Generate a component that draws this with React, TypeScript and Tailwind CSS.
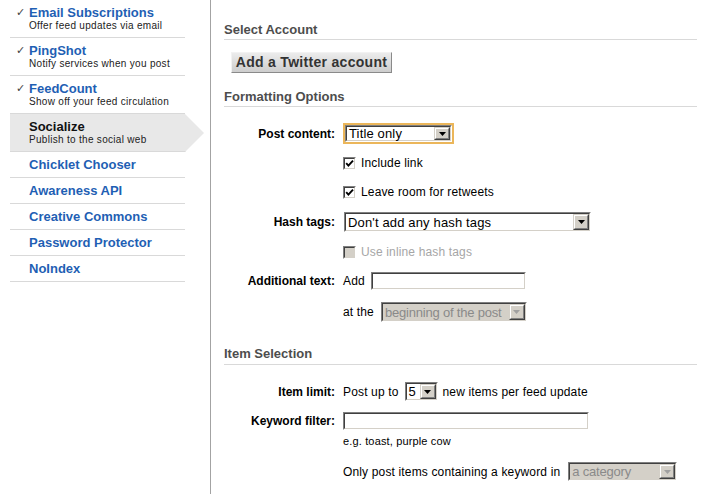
import clsx from "clsx";
import type { ReactNode } from "react";

const navItems = [
  { title: "Email Subscriptions", sub: "Offer feed updates via email", done: true },
  { title: "PingShot", sub: "Notify services when you post", done: true },
  { title: "FeedCount", sub: "Show off your feed circulation", done: true },
  { title: "Socialize", sub: "Publish to the social web", active: true },
  { title: "Chicklet Chooser" },
  { title: "Awareness API" },
  { title: "Creative Commons" },
  { title: "Password Protector" },
  { title: "NoIndex" },
];

// classic windows sunken border (2px)
function Sunken({ className, inner, children }: { className?: string; inner?: string; children?: ReactNode }) {
  return (
    <div className={clsx("border border-t-[#808080] border-l-[#808080] border-r-white border-b-white", className)}>
      <div className={clsx("flex h-full border border-t-[#404040] border-l-[#404040] border-r-[#d4d0c8] border-b-[#d4d0c8]", inner)}>
        {children}
      </div>
    </div>
  );
}

function Arrow({ disabled }: { disabled?: boolean }) {
  return (
    <div className="w-[16px] shrink-0 border border-t-[#d4d0c8] border-l-[#d4d0c8] border-r-[#404040] border-b-[#404040] bg-[#d4d0c8]">
      <div className="flex h-full items-center justify-center border border-t-white border-l-white border-r-[#808080] border-b-[#808080]">
        <svg width="7" height="4" viewBox="0 0 7 4">
          <path d="M0 0h7L3.5 4z" fill={disabled ? "#a0a0a0" : "#000"} />
        </svg>
      </div>
    </div>
  );
}

function Select({ value, className, disabled }: { value: string; className: string; disabled?: boolean }) {
  return (
    <Sunken className={className} inner={disabled ? "bg-[#d4d0c8]" : "bg-white"}>
      <span
        className={clsx(
          "flex-1 self-center overflow-hidden whitespace-nowrap pl-[2px] text-[13px] leading-[15px]",
          disabled ? "tracking-[-0.2px] text-[#8a8a8a]" : "text-black"
        )}
      >
        {value}
      </span>
      <Arrow disabled={disabled} />
    </Sunken>
  );
}

function Checkbox({ checked, disabled }: { checked?: boolean; disabled?: boolean }) {
  return (
    <Sunken className="h-[13px] w-[13px] shrink-0" inner={disabled ? "bg-[#d4d0c8]" : "bg-white"}>
      {checked && (
        <svg width="9" height="9" viewBox="0 0 9 9">
          <path d="M1.2 4.2l2.2 2.4L8 1.6" stroke="#000" strokeWidth="1.9" fill="none" />
        </svg>
      )}
    </Sunken>
  );
}

function Row({ label, className, children }: { label?: string; className: string; children: ReactNode }) {
  return (
    <div className={clsx("flex items-center", className)}>
      <div className="w-[111px] shrink-0 text-right text-[12px] font-bold leading-[14px] text-black">{label}</div>
      <div className="ml-[8px] flex h-full items-center text-[12px] leading-[14px] tracking-[0.15px] text-black">
        {children}
      </div>
    </div>
  );
}

function Heading({ children, className }: { children: ReactNode; className: string }) {
  return (
    <h3 className={clsx("border-b border-[#d9d9d9] text-[13px] font-bold leading-[15px] text-[#4d4d4d]", className)}>
      {children}
    </h3>
  );
}

export default function App() {
  return (
    <div className="flex h-[494px] overflow-hidden bg-white font-['Liberation_Sans',Arial,sans-serif]">
      {/* Sidebar */}
      <aside className="w-[211px] shrink-0 border-r border-[#a3a3a3] pl-[10px]">
        {navItems.map((item) =>
          item.sub ? (
            <div
              key={item.title}
              className={clsx(
                "flex h-[38px] border-b border-[#d9d9d9] pt-[5px]",
                item.active
                  ? "w-[194px] bg-[#e8e8e8] [clip-path:polygon(0_0,175px_0,194px_50%,175px_100%,0_100%)]"
                  : "w-[175px]"
              )}
            >
              <div className="w-[19px] shrink-0 pl-[6px] font-['DejaVu_Sans',sans-serif] text-[11px] leading-[15px] text-[#444]">
                {item.done ? "✓" : ""}
              </div>
              <div>
                <div
                  className={clsx(
                    "text-[13px] font-bold leading-[15px]",
                    item.active ? "text-[#111]" : "text-[#1f5fb4]"
                  )}
                >
                  {item.title}
                </div>
                <div className="text-[10px] leading-[12px] tracking-[0.3px] text-[#222]">{item.sub}</div>
              </div>
            </div>
          ) : (
            <div key={item.title} className="h-[26px] w-[175px] border-b border-[#d9d9d9] pl-[19px] pt-[5px]">
              <div className="text-[13px] font-bold leading-[15px] text-[#1f5fb4]">{item.title}</div>
            </div>
          )
        )}
      </aside>

      {/* Main */}
      <main className="flex-1 pl-[13px] pr-[4px]">
        <Heading className="mt-[22px] pb-[2px]">Select Account</Heading>
        <button className="ml-[7px] mt-[12px] flex h-[21px] w-[161px] items-center justify-center border border-t-[#f2f2f2] border-l-[#f2f2f2] border-r-[#8a8a8a] border-b-[#8a8a8a] bg-gradient-to-b from-[#ececec] to-[#cdcdcd] text-[14px] font-bold tracking-[0.3px] text-[#333]">
          Add a Twitter account
        </button>

        <Heading className="mt-[16px] pb-[2px]">Formatting Options</Heading>

        <Row label="Post content:" className="mt-[16px] h-[21px]">
          <div className="h-[21px] border-2 border-[#ebb65a]">
            <Select value="Title only" className="h-[17px] w-[107px]" />
          </div>
        </Row>
        <Row className="mt-[11px] h-[16px]">
          <Checkbox checked />
          <span className="ml-[5px]">Include link</span>
        </Row>
        <Row className="mt-[13px] h-[16px]">
          <Checkbox checked />
          <span className="ml-[5px]">Leave room for retweets</span>
        </Row>
        <Row label="Hash tags:" className="mt-[12px] h-[20px]">
          <Select value="Don't add any hash tags" className="ml-[1px] h-[20px] w-[247px]" />
        </Row>
        <Row className="mt-[12px] h-[16px]">
          <Checkbox disabled />
          <span className="ml-[5px] text-[#a6a6a6]">Use inline hash tags</span>
        </Row>
        <Row label="Additional text:" className="mt-[12px] h-[18px]">
          <span>Add</span>
          <Sunken className="ml-[6px] h-[18px] w-[155px]" inner="bg-white" />
        </Row>
        <Row className="mt-[12px] h-[20px]">
          <span>at the</span>
          <Select value="beginning of the post" className="ml-[7px] h-[20px] w-[146px]" disabled />
        </Row>

        <Heading className="mt-[24px] pb-[3px]">Item Selection</Heading>

        <Row label="Item limit:" className="mt-[17px] h-[19px]">
          <span>Post up to</span>
          <Select value="5" className="ml-[6px] h-[19px] w-[33px]" />
          <span className="ml-[5px]">new items per feed update</span>
        </Row>
        <Row label="Keyword filter:" className="mt-[11px] h-[18px]">
          <Sunken className="h-[18px] w-[246px]" inner="bg-white" />
        </Row>
        <Row className="mt-[4px] h-[14px]">
          <span className="text-[11px]">e.g. toast, purple cow</span>
        </Row>
        <Row className="mt-[14px] h-[19px]">
          <span>Only post items containing a keyword in</span>
          <Select value="a category" className="ml-[8px] h-[19px] w-[109px]" disabled />
        </Row>
      </main>
    </div>
  );
}
